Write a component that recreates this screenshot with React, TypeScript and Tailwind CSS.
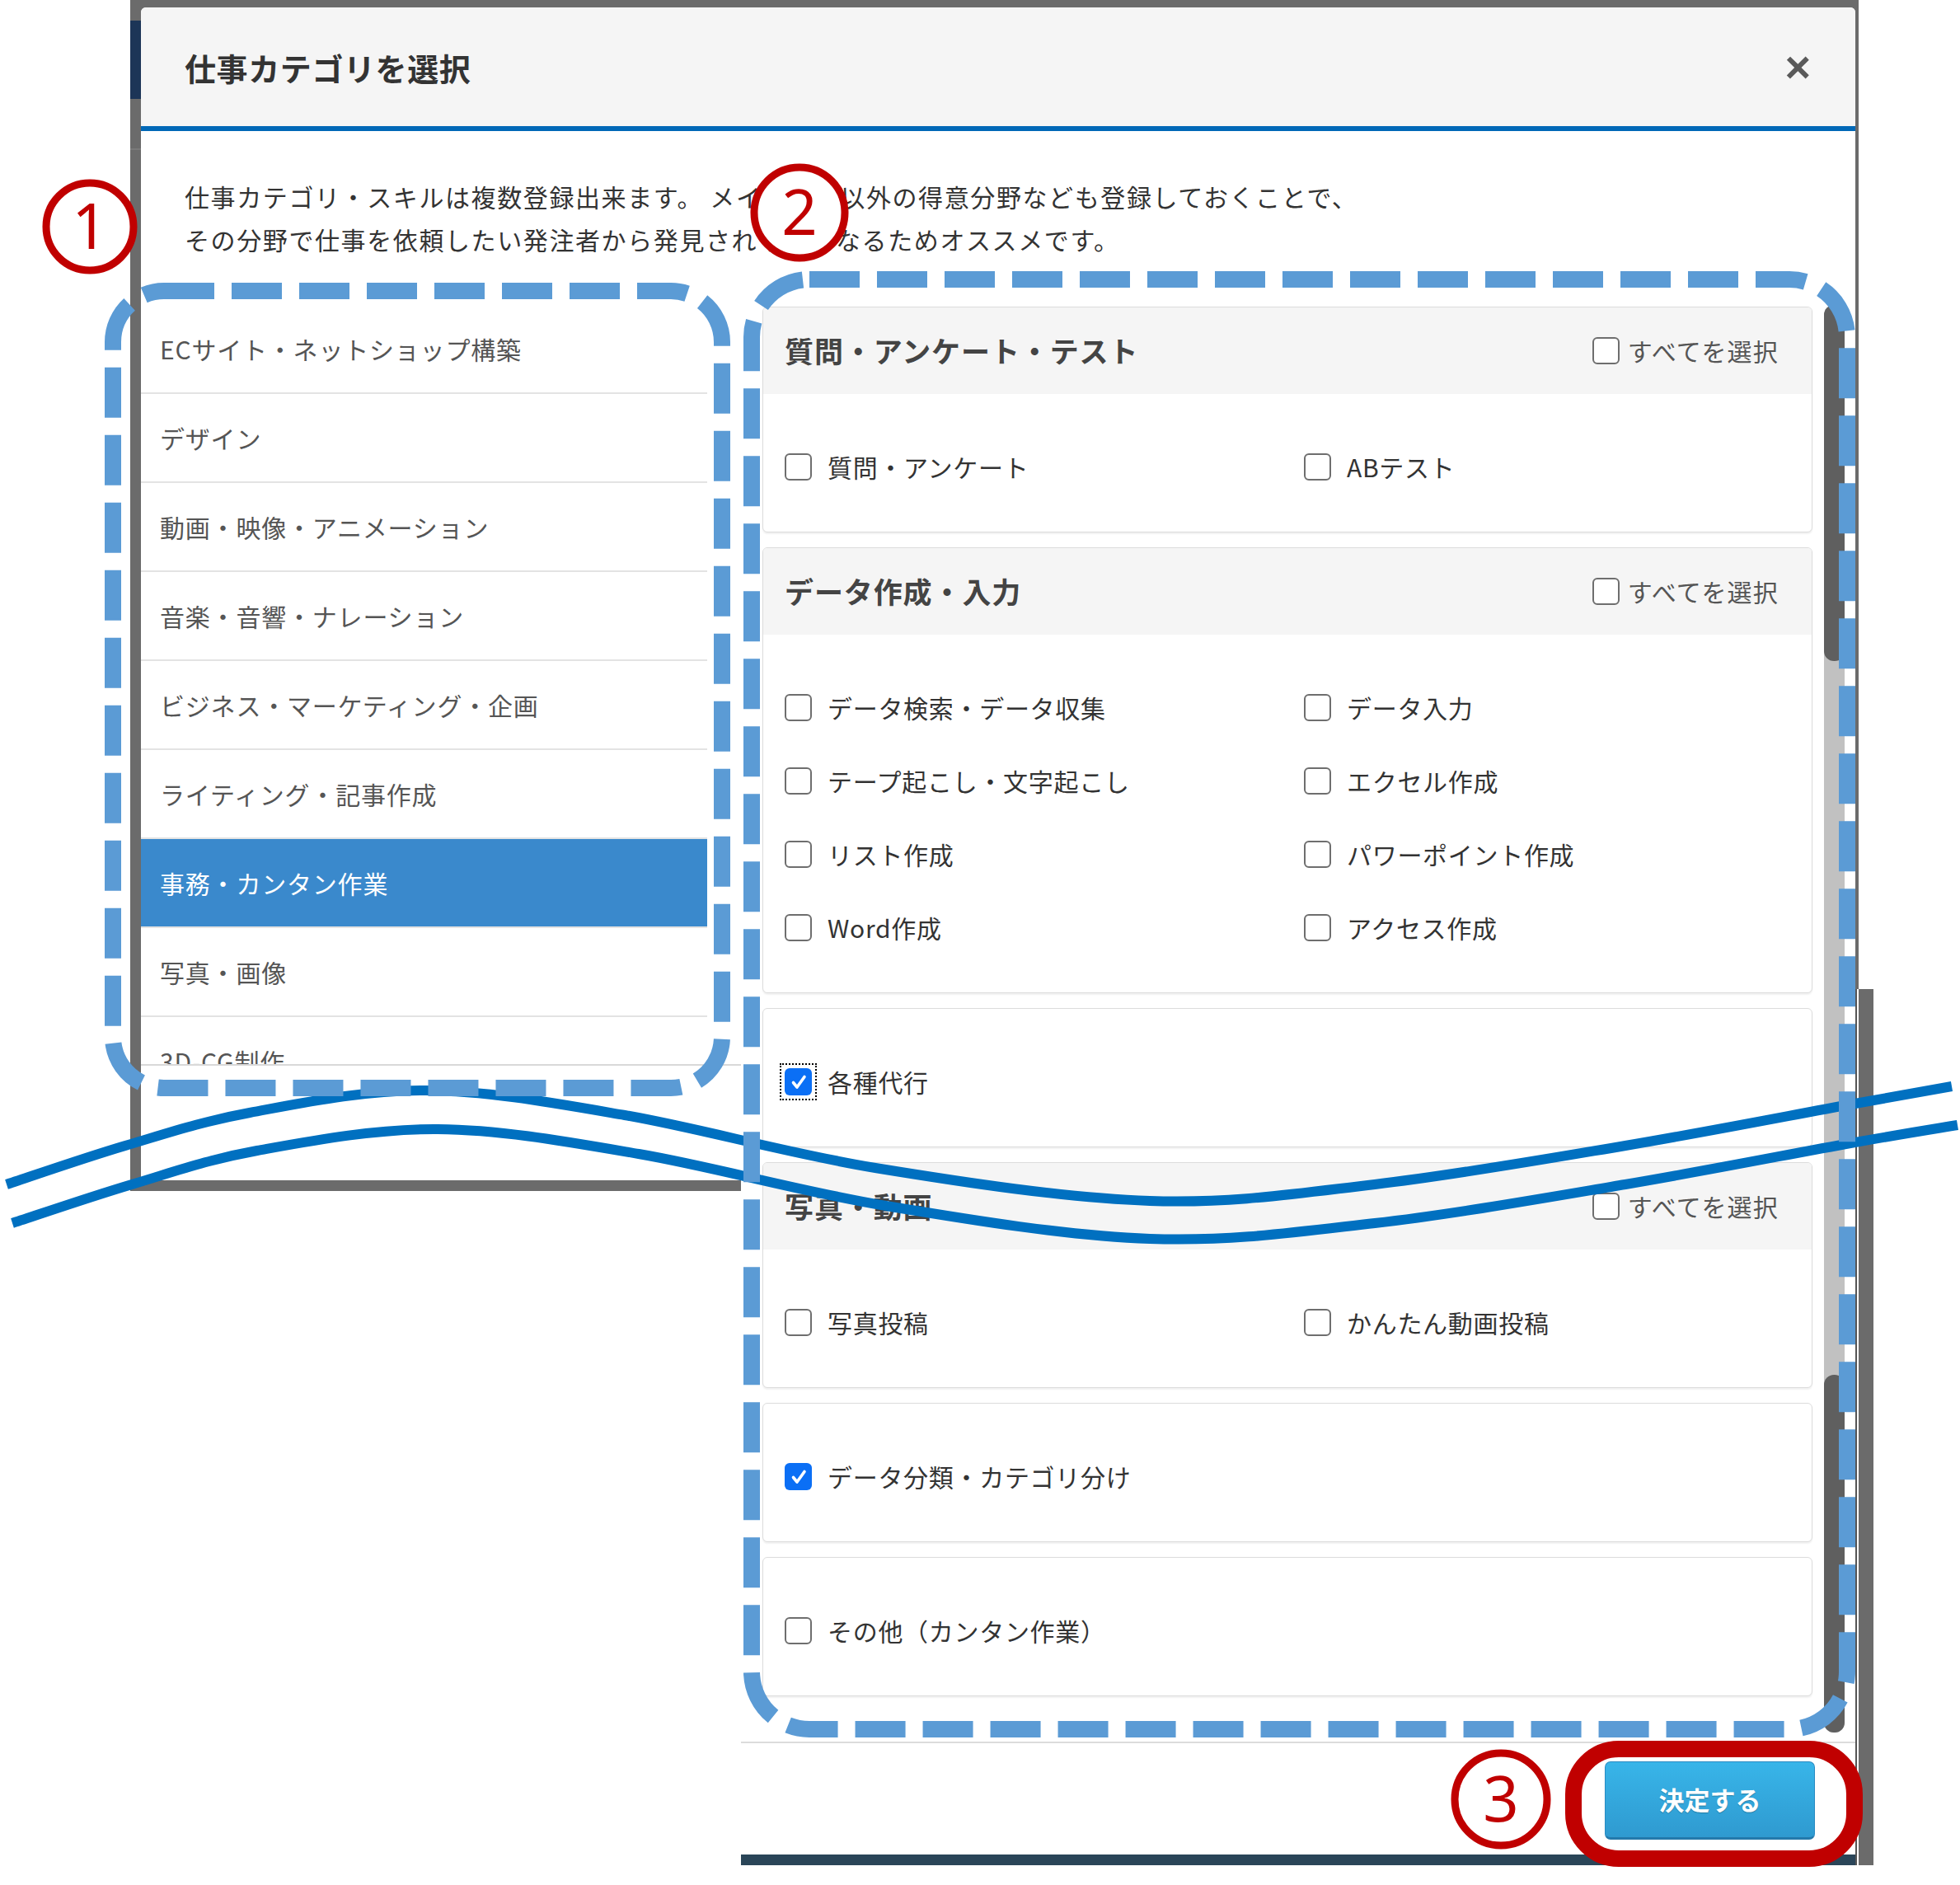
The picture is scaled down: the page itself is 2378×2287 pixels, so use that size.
import React from "react"

interface Item {
  label: string
  checked?: boolean
  focus?: boolean
}

interface Group {
  title?: string
  items: Item[]
}

const categories = [
  "ECサイト・ネットショップ構築",
  "デザイン",
  "動画・映像・アニメーション",
  "音楽・音響・ナレーション",
  "ビジネス・マーケティング・企画",
  "ライティング・記事作成",
  "事務・カンタン作業",
  "写真・画像",
  "3D-CG制作",
]

const groups: Group[] = [
  { title: "質問・アンケート・テスト", items: [{ label: "質問・アンケート" }, { label: "ABテスト" }] },
  {
    title: "データ作成・入力",
    items: [
      { label: "データ検索・データ収集" },
      { label: "データ入力" },
      { label: "テープ起こし・文字起こし" },
      { label: "エクセル作成" },
      { label: "リスト作成" },
      { label: "パワーポイント作成" },
      { label: "Word作成" },
      { label: "アクセス作成" },
    ],
  },
  { items: [{ label: "各種代行", checked: true, focus: true }] },
  { title: "写真・動画", items: [{ label: "写真投稿" }, { label: "かんたん動画投稿" }] },
  { items: [{ label: "データ分類・カテゴリ分け", checked: true }] },
  { items: [{ label: "その他（カンタン作業）" }] },
]

// smooth path through points (catmull-rom -> bezier)
const smooth = (pts: [number, number][]) => {
  let d = `M${pts[0][0]} ${pts[0][1]}`
  for (let i = 0; i < pts.length - 1; i++) {
    const p0 = pts[i - 1] || pts[i]
    const p1 = pts[i]
    const p2 = pts[i + 1]
    const p3 = pts[i + 2] || p2
    const c1x = p1[0] + (p2[0] - p0[0]) / 6
    const c1y = p1[1] + (p2[1] - p0[1]) / 6
    const c2x = p2[0] - (p3[0] - p1[0]) / 6
    const c2y = p2[1] - (p3[1] - p1[1]) / 6
    d += ` C${c1x} ${c1y} ${c2x} ${c2y} ${p2[0]} ${p2[1]}`
  }
  return d
}

const upperWave: [number, number][] = [
  [8, 1437], [152, 1390], [303, 1350], [516, 1323], [758, 1353], [1062, 1417],
  [1395, 1457], [1668, 1437], [1972, 1390], [2245, 1340], [2368, 1318],
]
const lowerWave: [number, number][] = [
  [15, 1484], [160, 1437], [312, 1396], [531, 1370], [775, 1400], [1075, 1463],
  [1395, 1503], [1668, 1484], [1972, 1437], [2245, 1387], [2375, 1365],
]

function Box({ checked, focus }: { checked?: boolean; focus?: boolean }) {
  const box = checked ? (
    <span className="flex h-[33px] w-[33px] items-center justify-center rounded-[6px] bg-[#0b6ff5]">
      <svg viewBox="0 0 24 24" className="h-[24px] w-[24px]" fill="none" stroke="white" strokeWidth="3.6" strokeLinecap="round" strokeLinejoin="round">
        <path d="M5.5 12.5l4.5 5.5L19 5.5" />
      </svg>
    </span>
  ) : (
    <span className="block h-[33px] w-[33px] rounded-[6px] border-2 border-[#6e6e6e] bg-white" />
  )
  if (focus) {
    return <span className="flex shrink-0 outline-2 outline-dotted outline-offset-[4px] outline-black">{box}</span>
  }
  return <span className="flex shrink-0">{box}</span>
}

function Panel({ group }: { group: Group }) {
  return (
    <div className="overflow-hidden rounded-[6px] border border-[#dcdcdc] bg-white shadow-[0_2px_2px_rgba(0,0,0,0.06)]">
      {group.title && (
        <div className="flex h-[105px] items-center justify-between bg-[#f5f5f5] pl-[26px] pr-[40px]">
          <h3 className="text-[35px] font-bold tracking-[0.9px] text-[#444]">{group.title}</h3>
          <label className="flex items-center gap-[10px] text-[30px] tracking-[1.2px] text-[#555]">
            <Box />
            すべてを選択
          </label>
        </div>
      )}
      <div className="grid grid-cols-[630px_1fr] pb-[34px] pl-[26px] pt-[44px]">
        {group.items.map((item) => (
          <div key={item.label} className="flex h-[89px] items-center gap-[19px] text-[30px] tracking-[0.7px] text-[#333]">
            <Box checked={item.checked} focus={item.focus} />
            {item.label}
          </div>
        ))}
      </div>
    </div>
  )
}

export default function App() {
  return (
    <div className="relative h-[2287px] w-[2378px] overflow-hidden bg-white font-['Noto_Sans_CJK_JP','Noto_Sans',sans-serif]">
      <div className="ml-[158px] w-[2115px]">
        {/* header + description */}
        <div className="flex w-[2097px] bg-[#6b6b6b] pt-[9px]">
          <div className="w-[13px] shrink-0">
            <div className="mt-[16px] h-[95px] bg-[#1c3557]" />
            <div className="mt-[60px] h-[2px] bg-[#7a7a7a]" />
          </div>
          <div className="w-[2080px] overflow-hidden rounded-t-[6px] bg-white">
            <div className="flex h-[150px] items-center justify-between border-b-[6px] border-[#0068b7] bg-[#f5f5f5] pl-[53px] pr-[54px]">
              <h2 className="text-[38px] font-bold tracking-[0.6px] text-[#333]">仕事カテゴリを選択</h2>
              <span className="font-['Liberation_Sans',sans-serif] text-[54px] font-bold leading-none text-[#5a5a5a]">×</span>
            </div>
            <div className="h-[211px] pl-[53px] pt-[53px] text-[30px] leading-[52px] tracking-[1.6px] text-[#333]">
              仕事カテゴリ・スキルは複数登録出来ます。 メイン業種以外の得意分野なども登録しておくことで、
              <br />
              その分野で仕事を依頼したい発注者から発見されやすくなるためオススメです。
            </div>
          </div>
          <div className="w-[4px] shrink-0" />
        </div>

        <div className="flex items-start">
          {/* left: category list */}
          <div className="w-[741px] shrink-0 bg-[#6b6b6b] pb-[13px] pl-[13px]">
            <div className="h-[1062px] w-[728px] bg-white">
              <div className="h-[923px] overflow-hidden border-b-2 border-[#d9d9d9]">
                {categories.map((c) => (
                  <div
                    key={c}
                    className={`flex h-[108px] w-[687px] shrink-0 items-center border-b-2 border-[#e3e3e3] pl-[23px] text-[30px] tracking-[0.8px] ${
                      c === "事務・カンタン作業" ? "bg-[#3a89cc] text-white" : "text-[#555]"
                    }`}
                  >
                    {c}
                  </div>
                ))}
              </div>
            </div>
          </div>

          {/* right: skills */}
          <div className="flex w-[1374px] shrink-0">
            <div className="w-[1352px] shrink-0">
              <div className="flex h-[1743px] items-start bg-white pl-[26px]">
                <div className="flex w-[1274px] shrink-0 flex-col gap-[18px] pt-[2px]">
                  {groups.map((g, i) => (
                    <Panel key={i} group={g} />
                  ))}
                </div>
                <div className="ml-[14px] flex h-[1732px] w-[25px] shrink-0 flex-col justify-between rounded-[12px] bg-[#c1c1c1]">
                  <div className="h-[432px] rounded-[12px] bg-[#5f5f5f]" />
                  <div className="h-[434px] rounded-[12px] bg-[#5f5f5f]" />
                </div>
              </div>
              <div className="flex h-[137px] justify-end border-t-2 border-[#dcdcdc] bg-white pr-[49px] pt-[22px]">
                <button className="flex h-[95px] w-[255px] items-center justify-center rounded-[7px] border border-[#2a8bc2] border-b-[3px] border-b-[#2479ab] bg-linear-to-b from-[#38b5e9] to-[#2f9ad0] text-[31px] font-bold text-white [text-shadow:0_1px_1px_rgba(0,0,0,0.25)]">
                  決定する
                </button>
              </div>
              <div className="h-[13px] bg-[#2a4558]" />
            </div>
            <div className="flex w-[22px] shrink-0 flex-col">
              <div className="flex h-[830px]">
                <div className="w-[4px] bg-[#6b6b6b]" />
              </div>
              <div className="flex h-[1063px]">
                <div className="w-[2px] bg-[#555]" />
                <div className="w-[2px] bg-white" />
                <div className="w-[18px] bg-[#6b6b6b]" />
              </div>
            </div>
          </div>
        </div>
      </div>

      {/* annotations */}
      <svg className="pointer-events-none absolute left-0 top-0" width="2378" height="2287" viewBox="0 0 2378 2287">
        <path d={smooth(upperWave)} fill="none" stroke="#0070c0" strokeWidth="12" />
        <path d={smooth(lowerWave)} fill="none" stroke="#0070c0" strokeWidth="12" />
        <rect x="137" y="353" width="739" height="967" rx="62" fill="none" stroke="#5b9bd5" strokeWidth="20" strokeDasharray="61 21" />
        <rect x="912" y="339" width="1329" height="1759" rx="70" fill="none" stroke="#5b9bd5" strokeWidth="20" strokeDasharray="61 21" />
        <circle cx="109" cy="275" r="53" fill="white" stroke="#c00000" strokeWidth="9" />
        <circle cx="970" cy="258" r="55" fill="white" stroke="#c00000" strokeWidth="9" />
        <circle cx="1821" cy="2183" r="56" fill="white" stroke="#c00000" strokeWidth="9" />
        <g fill="#c00000" fontFamily="Noto Sans, sans-serif" fontSize="76" textAnchor="middle">
          <text x="109" y="302">1</text>
          <text x="970" y="285">2</text>
          <text x="1821" y="2210">3</text>
        </g>
        <rect x="1909" y="2122" width="341" height="133" rx="55" fill="none" stroke="#c00000" strokeWidth="20" />
      </svg>
    </div>
  )
}
